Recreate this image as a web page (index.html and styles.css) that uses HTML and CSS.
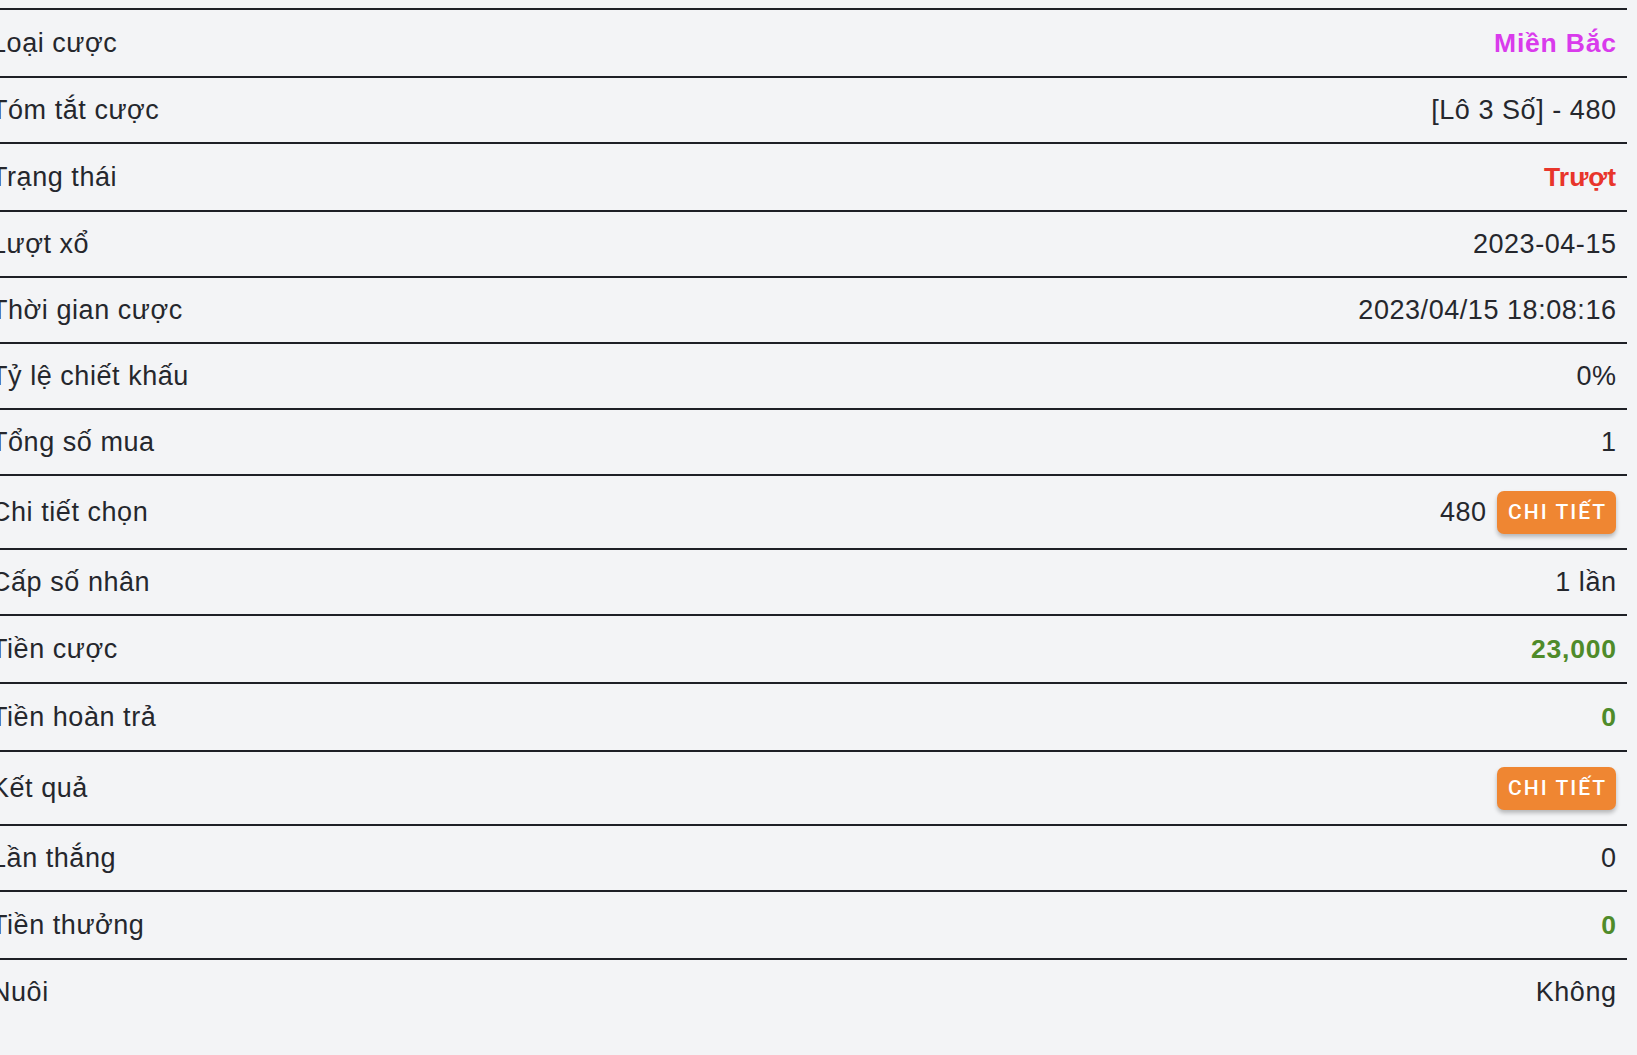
FILE: index.html
```html
<!DOCTYPE html>
<html lang="vi">
<head>
<meta charset="utf-8">
<title>Chi tiết cược</title>
<link rel="stylesheet" href="styles.css">
</head>
<body>
<div class="sheet">
  <div class="row"><span class="label">Loại cược</span><span class="value strong magenta">Miền Bắc</span></div>
  <div class="row"><span class="label">Tóm tắt cược</span><span class="value">[Lô 3 Số] - 480</span></div>
  <div class="row"><span class="label">Trạng thái</span><span class="value strong red">Trượt</span></div>
  <div class="row"><span class="label">Lượt xổ</span><span class="value">2023-04-15</span></div>
  <div class="row"><span class="label">Thời gian cược</span><span class="value">2023/04/15 18:08:16</span></div>
  <div class="row"><span class="label">Tỷ lệ chiết khấu</span><span class="value">0%</span></div>
  <div class="row"><span class="label">Tổng số mua</span><span class="value">1</span></div>
  <div class="row row-btn"><span class="label">Chi tiết chọn</span><span class="value-group"><span class="value">480</span><button class="btn">Chi tiết</button></span></div>
  <div class="row"><span class="label">Cấp số nhân</span><span class="value">1 lần</span></div>
  <div class="row"><span class="label">Tiền cược</span><span class="value strong green">23,000</span></div>
  <div class="row"><span class="label">Tiền hoàn trả</span><span class="value strong green">0</span></div>
  <div class="row row-btn"><span class="label">Kết quả</span><button class="btn">Chi tiết</button></div>
  <div class="row"><span class="label">Lần thắng</span><span class="value">0</span></div>
  <div class="row"><span class="label">Tiền thưởng</span><span class="value strong green">0</span></div>
  <div class="row"><span class="label">Nuôi</span><span class="value">Không</span></div>
</div>
</body>
</html>
```
FILE: styles.css
```css
html, body {
  margin: 0;
  background: #f3f4f6;
}

body {
  font-family: "Liberation Sans", Arial, sans-serif;
  color: #25272d;
  overflow: hidden;
}

.sheet {
  margin-left: -20px;
  width: 1647px;
  padding-top: 8px;
}

.row {
  display: flex;
  justify-content: space-between;
  align-items: center;
  border-top: 2px solid #1e2026;
  padding: 17px 11px;
}

.row-btn {
  padding-top: 14.5px;
  padding-bottom: 14.5px;
}

.label,
.value {
  font-size: 27px;
  line-height: 30px;
  letter-spacing: 0.55px;
  white-space: nowrap;
}

.value {
  margin-right: -0.55px;
}

.value.strong {
  font-weight: bold;
  font-size: 26.5px;
  line-height: 32px;
  letter-spacing: 0.8px;
  margin-right: -0.8px;
}

.magenta { color: #d93bec; }
.value.red { color: #e8352b; letter-spacing: 0; margin-right: 0; }
.green { color: #4f8b2a; }

.value-group {
  display: flex;
  align-items: center;
  gap: 11px;
}

.btn {
  height: 43px;
  padding: 0 9px 0 11px;
  border: none;
  border-radius: 7px;
  background: #ef8632;
  color: #fff;
  font-family: Roboto, "Liberation Sans", sans-serif;
  font-weight: 500;
  font-size: 21px;
  letter-spacing: 2px;
  text-transform: uppercase;
  box-shadow: 0 3px 4px rgba(0, 0, 0, 0.25);
}
```
